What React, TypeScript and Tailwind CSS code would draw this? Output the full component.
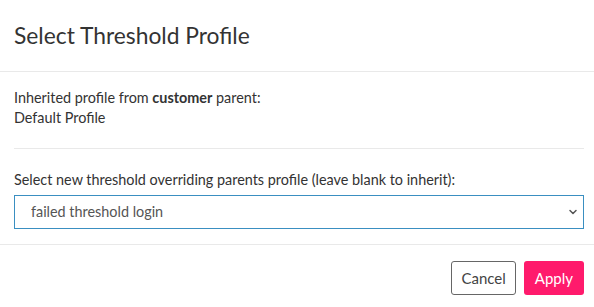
import { ChevronDown } from 'lucide-react'

const PROFILES = ['', 'Default Profile', 'failed threshold login']

export default function App(): React.JSX.Element {
  return (
    <div
      className="h-[307px] w-[594px] bg-white text-[#333]"
      style={{ fontFamily: 'Lato, "Noto Sans", sans-serif' }}
    >
      <div className="flex h-[72px] items-center border-b border-[#e9e9e9] px-[14px]">
        <h4 className="text-[22.8px] font-normal leading-none text-[#333]">Select Threshold Profile</h4>
      </div>

      <div className="border-b border-[#e9e9e9] pb-[15px] pl-[14px] pr-[10px] pt-[16px] text-[14.4px] leading-[20px]">
        <p>
          Inherited profile from <strong className="font-bold">customer</strong> parent:
        </p>
        <p>Default Profile</p>
        <hr className="mb-[21px] mt-[20px] border-t border-[#e9e9e9]" />
        <label className="block">Select new threshold overriding parents profile (leave blank to inherit):</label>
        <div className="relative mt-[5px]">
          <select
            defaultValue="failed threshold login"
            className="h-[34px] w-full appearance-none rounded-none border border-[#3a8fc1] bg-white pl-[16px] pr-8 text-[14.4px] text-[#555] outline-none"
          >
            {PROFILES.map((p) => (
              <option key={p} value={p}>
                {p}
              </option>
            ))}
          </select>
          <ChevronDown
            className="pointer-events-none absolute right-[5px] top-1/2 -translate-y-1/2 text-[#555]"
            size={12}
            strokeWidth={3}
          />
        </div>
      </div>

      <div className="flex justify-end gap-[8px] px-[10px] pt-[16px]">
        <button
          type="button"
          className="h-[34px] rounded-[3px] border border-[#666] bg-white px-[9px] text-[15px] text-[#444]"
        >
          Cancel
        </button>
        <button
          type="button"
          className="h-[34px] rounded-[3px] bg-[#ff1a6c] px-[11px] text-[15px] text-white"
        >
          Apply
        </button>
      </div>
    </div>
  )
}
